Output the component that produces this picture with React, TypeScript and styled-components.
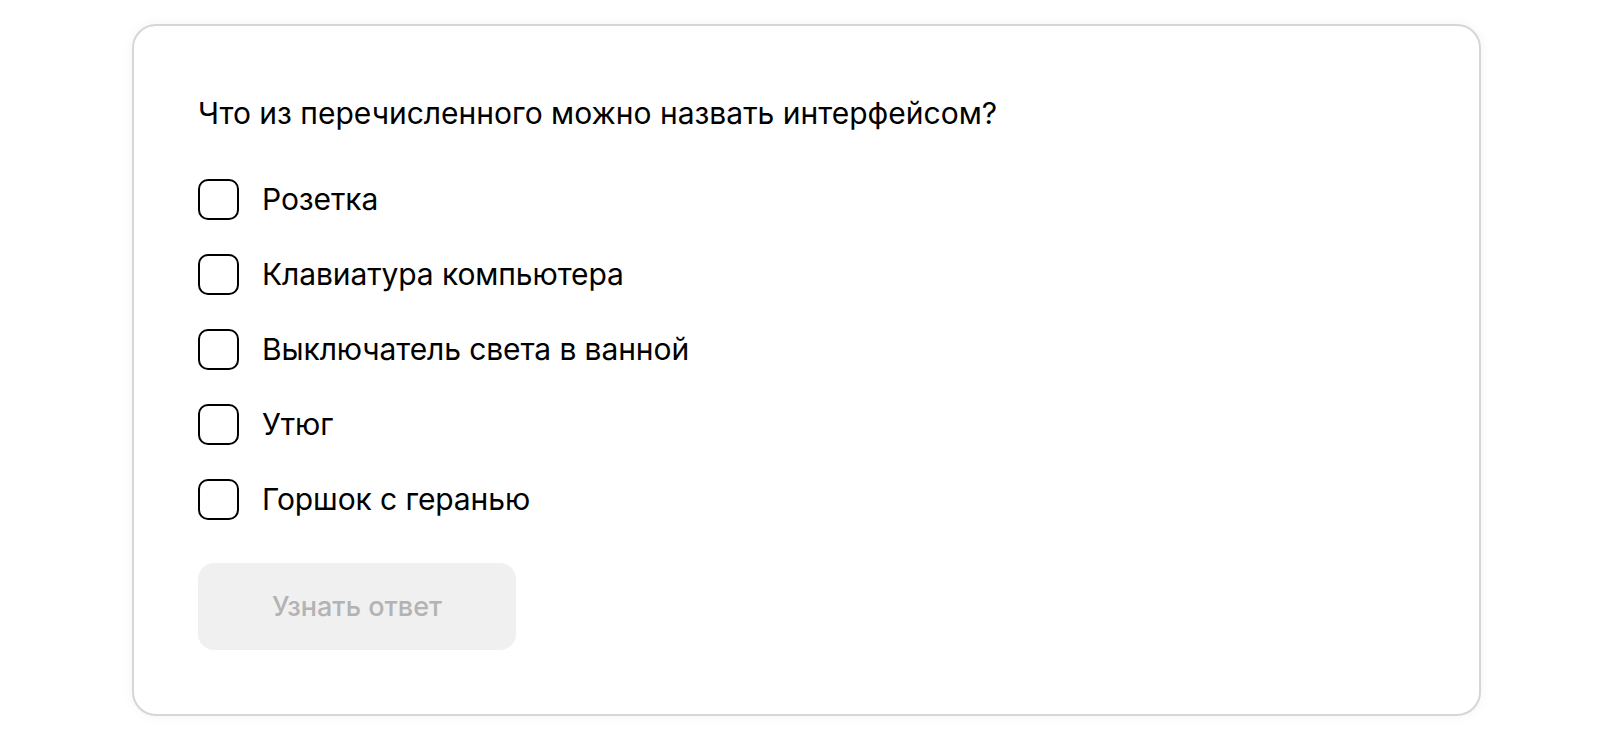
import React, { useState } from 'react';
import styled, { createGlobalStyle } from 'styled-components';

const GlobalStyle = createGlobalStyle`
  html, body {
    margin: 0;
    padding: 0;
    background: #ffffff;
  }
  body {
    font-family: Inter, "Noto Sans", sans-serif;
    color: #000000;
  }
`;

const Page = styled.div`
  padding: 24px 119px 25px 132px;
`;

const Card = styled.section`
  box-sizing: border-box;
  width: 1349px;
  height: 692px;
  padding: 67px 64px 64px 64px;
  border: 2px solid #d6d6d6;
  border-radius: 24px;
  background: #ffffff;
  box-shadow: 0 0 12px rgba(0, 0, 0, 0.05);
  display: flex;
  flex-direction: column;
`;

const Question = styled.h2`
  margin: 0 0 46px 0;
  font-size: 30px;
  line-height: 40px;
  font-weight: 400;
`;

const Options = styled.div`
  display: flex;
  flex-direction: column;
  gap: 34px;
`;

const Option = styled.label`
  display: flex;
  align-items: center;
  gap: 23px;
  cursor: pointer;
  font-size: 30px;
  line-height: 41px;
  letter-spacing: -0.1px;
`;

const Box = styled.span<{ $checked: boolean }>`
  box-sizing: border-box;
  width: 41px;
  height: 41px;
  flex: none;
  border: 2.5px solid #000000;
  border-radius: 10px;
  background: ${p => (p.$checked ? '#000000' : '#ffffff')};
`;

const Submit = styled.button`
  margin-top: 43px;
  width: 318px;
  height: 89px;
  border: none;
  border-radius: 16px;
  background: #f0f0f0;
  color: #b3b3b3;
  font-family: inherit;
  font-size: 27px;
  font-weight: 500;
  cursor: default;
`;

const answers = [
  'Розетка',
  'Клавиатура компьютера',
  'Выключатель света в ванной',
  'Утюг',
  'Горшок с геранью',
];

export default function App() {
  const [picked, setPicked] = useState<number[]>([]);

  const toggle = (i: number) =>
    setPicked(p => (p.includes(i) ? p.filter(x => x !== i) : [...p, i]));

  return (
    <>
      <GlobalStyle />
      <Page>
        <Card>
          <Question>Что из перечисленного можно назвать интерфейсом?</Question>
          <Options>
            {answers.map((a, i) => (
              <Option key={a} onClick={() => toggle(i)}>
                <Box $checked={picked.includes(i)} />
                {a}
              </Option>
            ))}
          </Options>
          <Submit disabled={picked.length === 0}>Узнать ответ</Submit>
        </Card>
      </Page>
    </>
  );
}
